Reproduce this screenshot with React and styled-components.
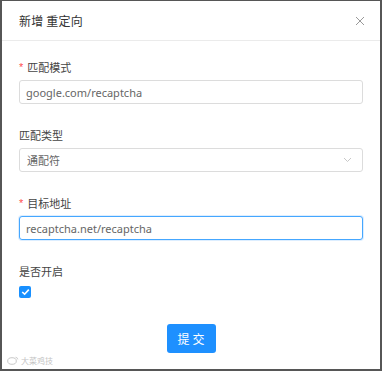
import React, { useState } from 'react';
import styled, { createGlobalStyle } from 'styled-components';

const GlobalStyle = createGlobalStyle`
  html, body {
    margin: 0;
    padding: 0;
    background: #565656;
  }
  body {
    font-family: "Noto Sans CJK SC", "Noto Sans", "Liberation Sans", sans-serif;
  }
`;

const Frame = styled.div`
  width: 382px;
  height: 371px;
  box-sizing: border-box;
  padding: 1px 2px 2px 2px;
`;

const Modal = styled.div`
  position: relative;
  height: 100%;
  background: #fff;
  display: flex;
  flex-direction: column;
`;

const Header = styled.div`
  height: 40px;
  box-sizing: border-box;
  padding: 0 13px 0 17px;
  display: flex;
  align-items: center;
  justify-content: space-between;
  border-bottom: 1px solid #ebebeb;
`;

const Title = styled.div`
  font-size: 12px;
  color: #333;
  letter-spacing: 0.2px;
`;

const Close = styled.button`
  border: 0;
  background: none;
  padding: 0;
  width: 14px;
  height: 14px;
  display: flex;
  align-items: center;
  justify-content: center;
  cursor: pointer;
`;

const Body = styled.div`
  padding: 17px 17px 0 17px;
  display: flex;
  flex-direction: column;
`;

const Field = styled.div`
  display: flex;
  flex-direction: column;
  margin-bottom: ${(p) => p.$gap || 22}px;
`;

const Label = styled.label`
  font-size: 11px;
  line-height: 18px;
  color: #444;
  margin-bottom: 4px;
  display: flex;
  align-items: center;

  &::before {
    content: ${(p) => (p.$required ? "'*'" : 'none')};
    color: #ff4d4f;
    font-size: 11px;
    margin-right: 4px;
    font-family: "Liberation Sans", sans-serif;
  }
`;

const Input = styled.input`
  height: 24px;
  box-sizing: border-box;
  border: 1px solid ${(p) => (p.$focused ? '#45a7ff' : '#dcdcdc')};
  box-shadow: ${(p) => (p.$focused ? '0 0 0 1px rgba(24,144,255,0.15)' : 'none')};
  border-radius: 3px;
  padding: 0 6px;
  font-size: 11px;
  color: #666;
  font-family: "Noto Sans", "Liberation Sans", sans-serif;
  outline: none;
`;

const Select = styled.div`
  height: 24px;
  box-sizing: border-box;
  border: 1px solid #dcdcdc;
  border-radius: 3px;
  padding: 0 10px 0 7px;
  display: flex;
  align-items: center;
  justify-content: space-between;
  font-size: 11px;
  color: #666;
`;

const Checkbox = styled.span`
  width: 12px;
  height: 12px;
  border-radius: 2px;
  background: #1890ff;
  display: flex;
  align-items: center;
  justify-content: center;
  margin-top: 2px;
`;

const Footer = styled.div`
  display: flex;
  justify-content: center;
  margin-top: 2px;
`;

const Submit = styled.button`
  width: 49px;
  height: 29px;
  border: 0;
  border-radius: 3px;
  background: #1e90ff;
  color: #fff;
  font-size: 12px;
  letter-spacing: 3px;
  padding: 0 0 0 3px;
  font-family: "Noto Sans CJK SC", sans-serif;
  cursor: pointer;
`;

const Watermark = styled.div`
  position: absolute;
  left: 5px;
  bottom: 3px;
  display: flex;
  align-items: center;
  gap: 2px;
  font-size: 8px;
  color: #c4c4c4;
`;

export default function App() {
  const [checked, setChecked] = useState(true);

  return (
    <>
      <GlobalStyle />
      <Frame>
        <Modal>
          <Header>
            <Title>新增 重定向</Title>
            <Close aria-label="close">
              <svg width="10" height="10" viewBox="0 0 10 10">
                <path d="M1 1L9 9M9 1L1 9" stroke="#999" strokeWidth="1" />
              </svg>
            </Close>
          </Header>
          <Body>
            <Field>
              <Label $required>匹配模式</Label>
              <Input defaultValue="google.com/recaptcha" />
            </Field>
            <Field>
              <Label>匹配类型</Label>
              <Select>
                <span>通配符</span>
                <svg width="9" height="6" viewBox="0 0 9 6">
                  <path d="M1 1L4.5 4.5L8 1" stroke="#c8c8c8" strokeWidth="1" fill="none" />
                </svg>
              </Select>
            </Field>
            <Field>
              <Label $required>目标地址</Label>
              <Input $focused defaultValue="recaptcha.net/recaptcha" />
            </Field>
            <Field $gap={24}>
              <Label>是否开启</Label>
              <Checkbox onClick={() => setChecked(!checked)}>
                {checked && (
                  <svg width="9" height="8" viewBox="0 0 9 8">
                    <path d="M1.2 4L3.6 6.2L7.8 1.6" stroke="#fff" strokeWidth="1.6" fill="none" />
                  </svg>
                )}
              </Checkbox>
            </Field>
            <Footer>
              <Submit>提交</Submit>
            </Footer>
          </Body>
          <Watermark>
            <svg width="12" height="9" viewBox="0 0 12 9">
              <ellipse cx="5" cy="5" rx="4.3" ry="3.3" stroke="#c8c8c8" fill="none" strokeWidth="1" />
              <path d="M8.5 1.2Q10.6 1.4 10.8 3.4" stroke="#c8c8c8" fill="none" strokeWidth="0.9" />
            </svg>
            <span>大菜鸡技</span>
          </Watermark>
        </Modal>
      </Frame>
    </>
  );
}
